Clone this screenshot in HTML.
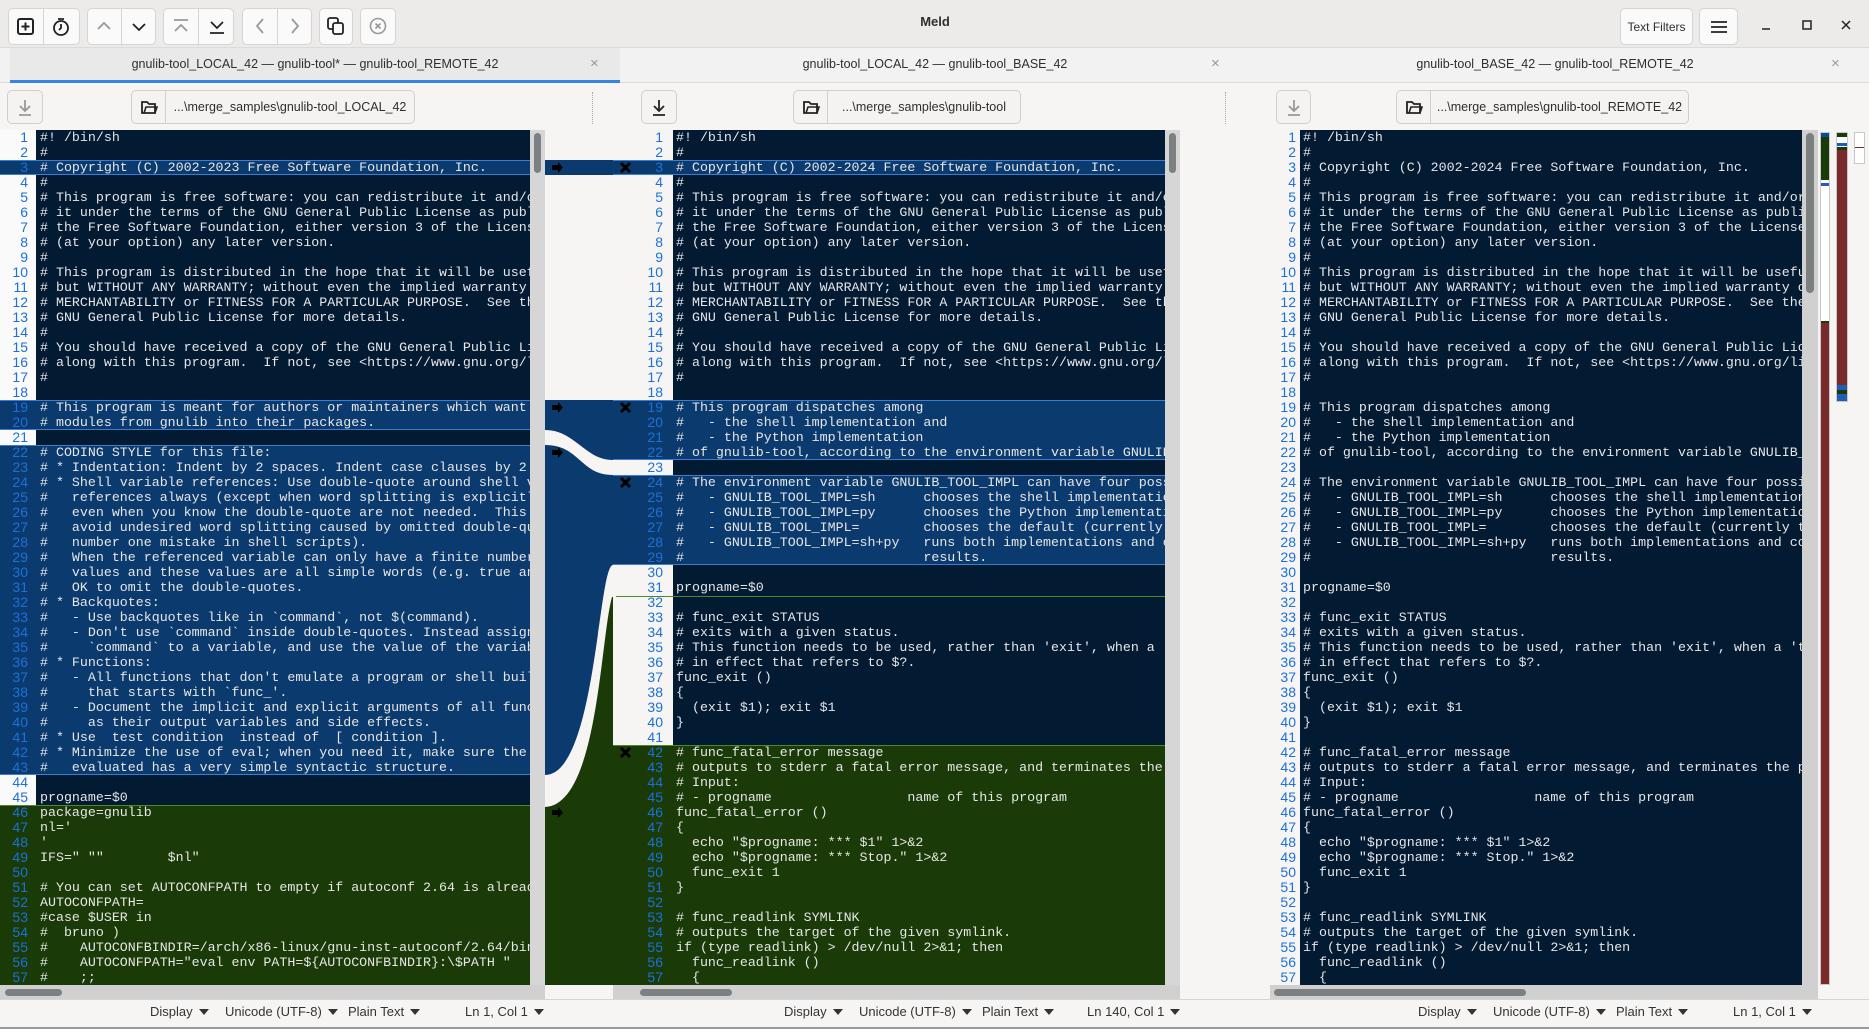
<!DOCTYPE html>
<html><head><meta charset="utf-8"><style>
*{margin:0;padding:0;box-sizing:border-box}
body{width:1869px;height:1029px;overflow:hidden;background:#f6f5f4;font-family:"Liberation Sans",sans-serif;position:relative;color:#2e2e2e}
.a{position:absolute}
.btn{position:absolute;top:8px;height:37px;border:1px solid #d6d5d4;background:#fafafa;border-radius:5px;display:flex;align-items:center;justify-content:center}
.code{position:absolute;top:130px;height:855px;overflow:hidden;font-family:"Liberation Mono",monospace;font-size:13.3px;line-height:15px;white-space:pre;color:#e6e6e6}
.ln{position:absolute;top:130px;font-family:"Liberation Sans",sans-serif;font-size:14px;line-height:15px;white-space:pre;color:#1c71d8;text-align:right}
.st{position:absolute;top:1004px;font-size:13px;color:#333}
.tri{display:inline-block;width:0;height:0;border-left:5px solid transparent;border-right:5px solid transparent;border-top:6px solid #333;margin-left:6px;vertical-align:1px}
.pb{position:absolute;top:90px;height:34px;border:1px solid #d0cfce;border-radius:5px;background:#f4f3f2;font-size:12.5px;display:flex;align-items:center;white-space:nowrap}
</style></head><body>
<!-- toolbar -->
<div class="a" style="left:0;top:0;width:1869px;height:48px;background:#ecebea;border-bottom:1px solid #dcdbda"></div>
<div class="btn" style="left:8px;width:72px"></div>
<div class="a" style="left:43px;top:8px;width:1px;height:37px;background:#d6d5d4"></div>
<svg class="a" style="left:15px;top:16px" width="22" height="22"><rect x="3" y="3" width="15" height="15" rx="2" fill="none" stroke="#222" stroke-width="2"/><path d="M10.5 6.5v8M6.5 10.5h8" stroke="#222" stroke-width="2"/></svg>
<svg class="a" style="left:50px;top:16px" width="22" height="22"><circle cx="11" cy="12" r="7" fill="none" stroke="#222" stroke-width="1.8"/><path d="M11 8v4l-2 2M8 3h6" stroke="#222" stroke-width="1.8" fill="none"/></svg>
<div class="btn" style="left:87px;width:69px"></div>
<div class="a" style="left:121px;top:8px;width:1px;height:37px;background:#d6d5d4"></div>
<svg class="a" style="left:93px;top:15px" width="22" height="22"><path d="M5 14l6-6 6 6" stroke="#999" stroke-width="1.8" fill="none"/></svg>
<svg class="a" style="left:128px;top:15px" width="22" height="22"><path d="M5 9l6 6 6-6" stroke="#222" stroke-width="1.8" fill="none"/></svg>
<div class="btn" style="left:163px;width:71px"></div>
<div class="a" style="left:198px;top:8px;width:1px;height:37px;background:#d6d5d4"></div>
<svg class="a" style="left:170px;top:15px" width="22" height="22"><path d="M4 5h14M5 16l6-6 6 6" stroke="#999" stroke-width="1.8" fill="none"/></svg>
<svg class="a" style="left:206px;top:15px" width="22" height="22"><path d="M4 18h14M5 7l6 6 6-6" stroke="#222" stroke-width="1.8" fill="none"/></svg>
<div class="btn" style="left:242px;width:70px"></div>
<div class="a" style="left:277px;top:8px;width:1px;height:37px;background:#d6d5d4"></div>
<svg class="a" style="left:249px;top:15px" width="22" height="22"><path d="M14 4l-6 7 6 7" stroke="#999" stroke-width="1.8" fill="none"/></svg>
<svg class="a" style="left:284px;top:15px" width="22" height="22"><path d="M8 4l6 7-6 7" stroke="#999" stroke-width="1.8" fill="none"/></svg>
<div class="btn" style="left:319px;width:34px"></div>
<svg class="a" style="left:325px;top:15px" width="22" height="22"><rect x="3" y="3" width="10" height="11" rx="2" fill="none" stroke="#222" stroke-width="1.8"/><rect x="8" y="8" width="10" height="11" rx="2" fill="#fafafa" stroke="#222" stroke-width="1.8"/></svg>
<div class="btn" style="left:360px;width:36px"></div>
<svg class="a" style="left:367px;top:15px" width="22" height="22"><circle cx="11" cy="11" r="7.5" fill="none" stroke="#999" stroke-width="1.6"/><path d="M8.5 8.5l5 5M13.5 8.5l-5 5" stroke="#999" stroke-width="1.6"/></svg>
<div class="a" style="left:900px;top:14px;width:70px;text-align:center;font-weight:bold;font-size:13px">Meld</div>
<div class="btn" style="left:1620px;width:73px;font-size:12px">Text Filters</div>
<div class="btn" style="left:1699px;width:39px"><svg width="18" height="14"><path d="M1 2h16M1 7h16M1 12h16" stroke="#222" stroke-width="1.8"/></svg></div>
<svg class="a" style="left:1758px;top:17px" width="16" height="16"><path d="M4 12h8" stroke="#222" stroke-width="1.5"/></svg>
<svg class="a" style="left:1799px;top:17px" width="16" height="16"><rect x="4" y="4" width="8" height="8" fill="none" stroke="#222" stroke-width="1.5"/></svg>
<svg class="a" style="left:1838px;top:17px" width="16" height="16"><path d="M4 4l8 8M12 4l-8 8" stroke="#222" stroke-width="1.5"/></svg>
<!-- tabs -->
<div class="a" style="left:0;top:48px;width:1869px;height:35px;background:#f2f2f2;border-bottom:1px solid #dcdbda"></div>
<div class="a" style="left:10px;top:48px;width:610px;height:35px;background:#e9e9e9"></div>
<div class="a" style="left:10px;top:80px;width:610px;height:3px;background:#3584e4"></div>
<div class="a" style="left:10px;top:57px;width:610px;text-align:center;font-size:12.5px">gnulib-tool_LOCAL_42 — gnulib-tool* — gnulib-tool_REMOTE_42</div>
<div class="a" style="left:630px;top:57px;width:610px;text-align:center;font-size:12.5px">gnulib-tool_LOCAL_42 — gnulib-tool_BASE_42</div>
<div class="a" style="left:1250px;top:57px;width:610px;text-align:center;font-size:12.5px">gnulib-tool_BASE_42 — gnulib-tool_REMOTE_42</div>
<div class="a" style="left:590px;top:55px;font-size:15px;color:#999">×</div>
<div class="a" style="left:1211px;top:55px;font-size:15px;color:#999">×</div>
<div class="a" style="left:1831px;top:55px;font-size:15px;color:#999">×</div>
<!-- path bars -->
<div class="pb" style="left:7px;width:36px;justify-content:center"><svg width="18" height="20"><path d="M9 3v11M4 9l5 5 5-5M3 18h12" stroke="#999" stroke-width="1.8" fill="none"/></svg></div>
<div class="pb" style="left:131px;width:284px"><div style="width:34px;height:100%;border-right:1px solid #d0cfce;display:flex;align-items:center;justify-content:center"><svg width="18" height="16"><path d="M2 3h5l2 2h6v9H2z" fill="none" stroke="#222" stroke-width="1.8"/><path d="M4 14l2-6h11l-2 6" fill="none" stroke="#222" stroke-width="1.6"/></svg></div><span style="flex:1;text-align:center">...\merge_samples\gnulib-tool_LOCAL_42</span></div>
<div class="a" style="left:592px;top:92px;height:32px;border-left:1px dotted #aaa"></div>
<div class="pb" style="left:641px;width:36px;justify-content:center"><svg width="18" height="20"><path d="M9 3v11M4 9l5 5 5-5M3 18h12" stroke="#222" stroke-width="1.8" fill="none"/></svg></div>
<div class="pb" style="left:793px;width:228px"><div style="width:34px;height:100%;border-right:1px solid #d0cfce;display:flex;align-items:center;justify-content:center"><svg width="18" height="16"><path d="M2 3h5l2 2h6v9H2z" fill="none" stroke="#222" stroke-width="1.8"/><path d="M4 14l2-6h11l-2 6" fill="none" stroke="#222" stroke-width="1.6"/></svg></div><span style="flex:1;text-align:center">...\merge_samples\gnulib-tool</span></div>
<div class="a" style="left:1225px;top:92px;height:32px;border-left:1px dotted #aaa"></div>
<div class="pb" style="left:1276px;width:35px;justify-content:center"><svg width="18" height="20"><path d="M9 3v11M4 9l5 5 5-5M3 18h12" stroke="#999" stroke-width="1.8" fill="none"/></svg></div>
<div class="pb" style="left:1396px;width:293px"><div style="width:34px;height:100%;border-right:1px solid #d0cfce;display:flex;align-items:center;justify-content:center"><svg width="18" height="16"><path d="M2 3h5l2 2h6v9H2z" fill="none" stroke="#222" stroke-width="1.8"/><path d="M4 14l2-6h11l-2 6" fill="none" stroke="#222" stroke-width="1.6"/></svg></div><span style="flex:1;text-align:center">...\merge_samples\gnulib-tool_REMOTE_42</span></div>

<!-- LEFT pane -->
<div class="a" style="left:0;top:130px;width:36px;height:855px;background:#fafafa"></div>
<div class="a" style="left:36px;top:130px;width:494px;height:855px;background:#031a33"></div>
<div class="a" style="left:0;top:160px;width:530px;height:15px;background:#0b3a6e;border-top:1px solid #3b7dd0;border-bottom:1px solid #3b7dd0"></div>
<div class="a" style="left:0;top:400px;width:530px;height:30px;background:#0b3a6e;border-top:1px solid #3b7dd0;border-bottom:1px solid #3b7dd0"></div>
<div class="a" style="left:0;top:445px;width:530px;height:330px;background:#0b3a6e;border-top:1px solid #3b7dd0;border-bottom:1px solid #3b7dd0"></div>
<div class="a" style="left:0;top:805px;width:530px;height:180px;background:#1a3a08;border-top:1px solid #4a8a2a"></div>
<div class="ln" style="left:0;width:28px">1
2
3
4
5
6
7
8
9
10
11
12
13
14
15
16
17
18
19
20
21
22
23
24
25
26
27
28
29
30
31
32
33
34
35
36
37
38
39
40
41
42
43
44
45
46
47
48
49
50
51
52
53
54
55
56
57</div>
<div class="code" style="left:40px;width:490px">#! /bin/sh
#
# Copyright (C) 2002-2023 Free Software Foundation, Inc.
#
# This program is free software: you can redistribute it and/or modify
# it under the terms of the GNU General Public License as published by
# the Free Software Foundation, either version 3 of the License, or
# (at your option) any later version.
#
# This program is distributed in the hope that it will be useful,
# but WITHOUT ANY WARRANTY; without even the implied warranty of
# MERCHANTABILITY or FITNESS FOR A PARTICULAR PURPOSE.  See the
# GNU General Public License for more details.
#
# You should have received a copy of the GNU General Public License
# along with this program.  If not, see &lt;https://www.gnu.org/licenses/&gt;.
#

# This program is meant for authors or maintainers which want to import
# modules from gnulib into their packages.

# CODING STYLE for this file:
# * Indentation: Indent by 2 spaces. Indent case clauses by 2 spaces as well.
# * Shell variable references: Use double-quote around shell variable
#   references always (except when word splitting is explicitly desired),
#   even when you know the double-quote are not needed.  This style
#   avoid undesired word splitting caused by omitted double-quotes
#   number one mistake in shell scripts).
#   When the referenced variable can only have a finite number of
#   values and these values are all simple words (e.g. true and false)
#   OK to omit the double-quotes.
# * Backquotes:
#   - Use backquotes like in `command`, not $(command).
#   - Don't use `command` inside double-quotes. Instead assign the result
#     `command` to a variable, and use the value of the variable after
# * Functions:
#   - All functions that don't emulate a program or shell builtin have
#     that starts with `func_'.
#   - Document the implicit and explicit arguments of all functions
#     as their output variables and side effects.
# * Use  test condition  instead of  [ condition ].
# * Minimize the use of eval; when you need it, make sure the string
#   evaluated has a very simple syntactic structure.

progname=$0
package=gnulib
nl='
'
IFS=" ""        $nl"

# You can set AUTOCONFPATH to empty if autoconf 2.64 is already the default.
AUTOCONFPATH=
#case $USER in
#  bruno )
#    AUTOCONFBINDIR=/arch/x86-linux/gnu-inst-autoconf/2.64/bin
#    AUTOCONFPATH="eval env PATH=${AUTOCONFBINDIR}:\$PATH "
#    ;;</div>
<div class="a" style="left:530px;top:130px;width:15px;height:855px;background:#d6d6d6"></div>
<div class="a" style="left:534px;top:133px;width:7px;height:40px;background:#7d8080;border-radius:4px"></div>

<!-- Gutter 1 -->
<svg class="a" style="left:545px;top:130px" width="68" height="855" viewBox="545 130 68 855">
<rect x="545" y="130" width="68" height="855" fill="#f6f5f4"/>
<rect x="545" y="160" width="68" height="15" fill="#0b3a6e"/>
<path d="M545,400 L613,400 L613,460 C585,460 575,430 545,430 Z" fill="#0b3a6e"/>
<path d="M545,445 C580,445 580,475 613,475 L613,565 C598,565 596,775 545,775 Z" fill="#0b3a6e"/>
<path d="M545,807 C598,805 600,640 612,597 L618,597 L618,985 L545,985 Z" fill="#1a3a08"/>
<path d="M552,165h6v-3l5,5.5-5,5.5v-3h-6z" fill="#000"/>
<path d="M552,405h6v-3l5,5.5-5,5.5v-3h-6z" fill="#000"/>
<path d="M552,450h6v-3l5,5.5-5,5.5v-3h-6z" fill="#000"/>
<path d="M552,810h6v-3l5,5.5-5,5.5v-3h-6z" fill="#000"/>
</svg>
<!-- MID pane -->
<div class="a" style="left:613px;top:130px;width:60px;height:855px;background:#f6f5f4"></div>
<div class="a" style="left:673px;top:130px;width:492px;height:855px;background:#031a33"></div>
<div class="a" style="left:613px;top:160px;width:552px;height:15px;background:#0b3a6e;border-top:1px solid #3b7dd0;border-bottom:1px solid #3b7dd0"></div>
<div class="a" style="left:613px;top:400px;width:552px;height:60px;background:#0b3a6e;border-top:1px solid #3b7dd0;border-bottom:1px solid #3b7dd0"></div>
<div class="a" style="left:613px;top:475px;width:552px;height:90px;background:#0b3a6e;border-top:1px solid #3b7dd0;border-bottom:1px solid #3b7dd0"></div>
<div class="a" style="left:616px;top:596px;width:549px;height:1px;background:#4a8a2a"></div>
<div class="a" style="left:613px;top:745px;width:552px;height:240px;background:#1a3a08;border-top:1px solid #4a8a2a"></div>
<svg class="a" style="left:618px;top:130px" width="20" height="855">
<path d="M3,33l9,9M12,33l-9,9" stroke="#000" stroke-width="3"/>
<path d="M3,273l9,9M12,273l-9,9" stroke="#000" stroke-width="3"/>
<path d="M3,348l9,9M12,348l-9,9" stroke="#000" stroke-width="3"/>
<path d="M3,618l9,9M12,618l-9,9" stroke="#000" stroke-width="3"/>
</svg>
<div class="ln" style="left:630px;width:33px">1
2
3
4
5
6
7
8
9
10
11
12
13
14
15
16
17
18
19
20
21
22
23
24
25
26
27
28
29
30
31
32
33
34
35
36
37
38
39
40
41
42
43
44
45
46
47
48
49
50
51
52
53
54
55
56
57</div>
<div class="code" style="left:676px;width:489px">#! /bin/sh
#
# Copyright (C) 2002-2024 Free Software Foundation, Inc.
#
# This program is free software: you can redistribute it and/or modify
# it under the terms of the GNU General Public License as published by
# the Free Software Foundation, either version 3 of the License, or
# (at your option) any later version.
#
# This program is distributed in the hope that it will be useful,
# but WITHOUT ANY WARRANTY; without even the implied warranty of
# MERCHANTABILITY or FITNESS FOR A PARTICULAR PURPOSE.  See the
# GNU General Public License for more details.
#
# You should have received a copy of the GNU General Public License
# along with this program.  If not, see &lt;https://www.gnu.org/licenses/&gt;.
#

# This program dispatches among
#   - the shell implementation and
#   - the Python implementation
# of gnulib-tool, according to the environment variable GNULIB_TOOL_IMPL.

# The environment variable GNULIB_TOOL_IMPL can have four possible values:
#   - GNULIB_TOOL_IMPL=sh      chooses the shell implementation.
#   - GNULIB_TOOL_IMPL=py      chooses the Python implementation.
#   - GNULIB_TOOL_IMPL=        chooses the default (currently the shell).
#   - GNULIB_TOOL_IMPL=sh+py   runs both implementations and compares
#                              results.

progname=$0

# func_exit STATUS
# exits with a given status.
# This function needs to be used, rather than 'exit', when a 'trap' handler
# in effect that refers to $?.
func_exit ()
{
  (exit $1); exit $1
}

# func_fatal_error message
# outputs to stderr a fatal error message, and terminates the program.
# Input:
# - progname                 name of this program
func_fatal_error ()
{
  echo "$progname: *** $1" 1>&amp;2
  echo "$progname: *** Stop." 1>&amp;2
  func_exit 1
}

# func_readlink SYMLINK
# outputs the target of the given symlink.
if (type readlink) > /dev/null 2>&amp;1; then
  func_readlink ()
  {</div>
<div class="a" style="left:1165px;top:130px;width:15px;height:855px;background:#d6d6d6"></div>
<div class="a" style="left:1169px;top:133px;width:7px;height:40px;background:#7d8080;border-radius:4px"></div>

<!-- RIGHT pane -->
<div class="a" style="left:1180px;top:130px;width:120px;height:855px;background:#f6f5f4"></div>
<div class="a" style="left:1300px;top:130px;width:502px;height:855px;background:#031a33"></div>
<div class="ln" style="left:1260px;width:36px">1
2
3
4
5
6
7
8
9
10
11
12
13
14
15
16
17
18
19
20
21
22
23
24
25
26
27
28
29
30
31
32
33
34
35
36
37
38
39
40
41
42
43
44
45
46
47
48
49
50
51
52
53
54
55
56
57</div>
<div class="code" style="left:1303px;width:499px">#! /bin/sh
#
# Copyright (C) 2002-2024 Free Software Foundation, Inc.
#
# This program is free software: you can redistribute it and/or modify
# it under the terms of the GNU General Public License as published by
# the Free Software Foundation, either version 3 of the License, or
# (at your option) any later version.
#
# This program is distributed in the hope that it will be useful,
# but WITHOUT ANY WARRANTY; without even the implied warranty of
# MERCHANTABILITY or FITNESS FOR A PARTICULAR PURPOSE.  See the
# GNU General Public License for more details.
#
# You should have received a copy of the GNU General Public License
# along with this program.  If not, see &lt;https://www.gnu.org/licenses/&gt;.
#

# This program dispatches among
#   - the shell implementation and
#   - the Python implementation
# of gnulib-tool, according to the environment variable GNULIB_TOOL_IMPL.

# The environment variable GNULIB_TOOL_IMPL can have four possible values:
#   - GNULIB_TOOL_IMPL=sh      chooses the shell implementation.
#   - GNULIB_TOOL_IMPL=py      chooses the Python implementation.
#   - GNULIB_TOOL_IMPL=        chooses the default (currently the shell).
#   - GNULIB_TOOL_IMPL=sh+py   runs both implementations and compares
#                              results.

progname=$0

# func_exit STATUS
# exits with a given status.
# This function needs to be used, rather than 'exit', when a 'trap' handler
# in effect that refers to $?.
func_exit ()
{
  (exit $1); exit $1
}

# func_fatal_error message
# outputs to stderr a fatal error message, and terminates the program.
# Input:
# - progname                 name of this program
func_fatal_error ()
{
  echo "$progname: *** $1" 1>&amp;2
  echo "$progname: *** Stop." 1>&amp;2
  func_exit 1
}

# func_readlink SYMLINK
# outputs the target of the given symlink.
if (type readlink) > /dev/null 2>&amp;1; then
  func_readlink ()
  {</div>
<div class="a" style="left:1802px;top:130px;width:16px;height:855px;background:#d0d0d0"></div>
<div class="a" style="left:1806px;top:133px;width:8px;height:160px;background:#7d8080;border-radius:4px"></div>
<!-- map -->
<div class="a" style="left:1820px;top:132px;width:10px;height:853px;background:#7a2a2a;border:1px solid #c8c8c8"></div>
<div class="a" style="left:1821px;top:133px;width:8px;height:190px;background:#fff"></div>
<div class="a" style="left:1821px;top:133px;width:8px;height:4px;background:#0b4a9e"></div>
<div class="a" style="left:1821px;top:137px;width:8px;height:43px;background:#1a3a08"></div>
<div class="a" style="left:1821px;top:183px;width:8px;height:3px;background:#1c5fb4"></div>
<div class="a" style="left:1821px;top:321px;width:8px;height:2px;background:#1a3a08"></div>
<div class="a" style="left:1836px;top:132px;width:12px;height:270px;background:#7a2a2a;border:1px solid #c8c8c8"></div>
<div class="a" style="left:1837px;top:133px;width:10px;height:17px;background:#fff"></div>
<div class="a" style="left:1837px;top:133px;width:10px;height:4px;background:#1a3a08"></div>
<div class="a" style="left:1837px;top:143px;width:10px;height:3px;background:#1c5fb4"></div>
<div class="a" style="left:1837px;top:147px;width:10px;height:3px;background:#1a3a08"></div>
<div class="a" style="left:1837px;top:385px;width:10px;height:16px;background:#1c5fb4"></div>
<div class="a" style="left:1837px;top:390px;width:10px;height:4px;background:#1a3a08"></div>
<div class="a" style="left:1854px;top:132px;width:11px;height:32px;background:#fff;border:1px solid #c8c8c8"></div>
<div class="a" style="left:1855px;top:147px;width:9px;height:1px;background:#7a2a2a"></div>

<!-- horizontal scrollbars -->
<div class="a" style="left:0;top:985px;width:545px;height:14px;background:#d0d0d0"></div>
<div class="a" style="left:5px;top:989px;width:57px;height:7px;background:#7d8080;border-radius:4px"></div>
<div class="a" style="left:613px;top:985px;width:567px;height:14px;background:#d0d0d0"></div>
<div class="a" style="left:640px;top:989px;width:92px;height:7px;background:#7d8080;border-radius:4px"></div>
<div class="a" style="left:1270px;top:985px;width:548px;height:14px;background:#d0d0d0"></div>
<div class="a" style="left:1274px;top:989px;width:252px;height:7px;background:#7d8080;border-radius:4px"></div>
<!-- status bar -->
<div class="a" style="left:0;top:999px;width:1869px;height:30px;background:#f6f5f4;border-top:1px solid #d6d5d4"></div>
<div class="a" style="left:0;top:1027px;width:1869px;height:2px;background:#9a9a9a"></div>
<div class="st" style="left:150px">Display<span class="tri"></span></div>
<div class="st" style="left:225px">Unicode (UTF-8)<span class="tri"></span></div>
<div class="st" style="left:348px">Plain Text<span class="tri"></span></div>
<div class="st" style="left:465px">Ln 1, Col 1<span class="tri"></span></div>
<div class="st" style="left:784px">Display<span class="tri"></span></div>
<div class="st" style="left:859px">Unicode (UTF-8)<span class="tri"></span></div>
<div class="st" style="left:982px">Plain Text<span class="tri"></span></div>
<div class="st" style="left:1087px">Ln 140, Col 1<span class="tri"></span></div>
<div class="st" style="left:1418px">Display<span class="tri"></span></div>
<div class="st" style="left:1493px">Unicode (UTF-8)<span class="tri"></span></div>
<div class="st" style="left:1616px">Plain Text<span class="tri"></span></div>
<div class="st" style="left:1733px">Ln 1, Col 1<span class="tri"></span></div>
</body></html>
